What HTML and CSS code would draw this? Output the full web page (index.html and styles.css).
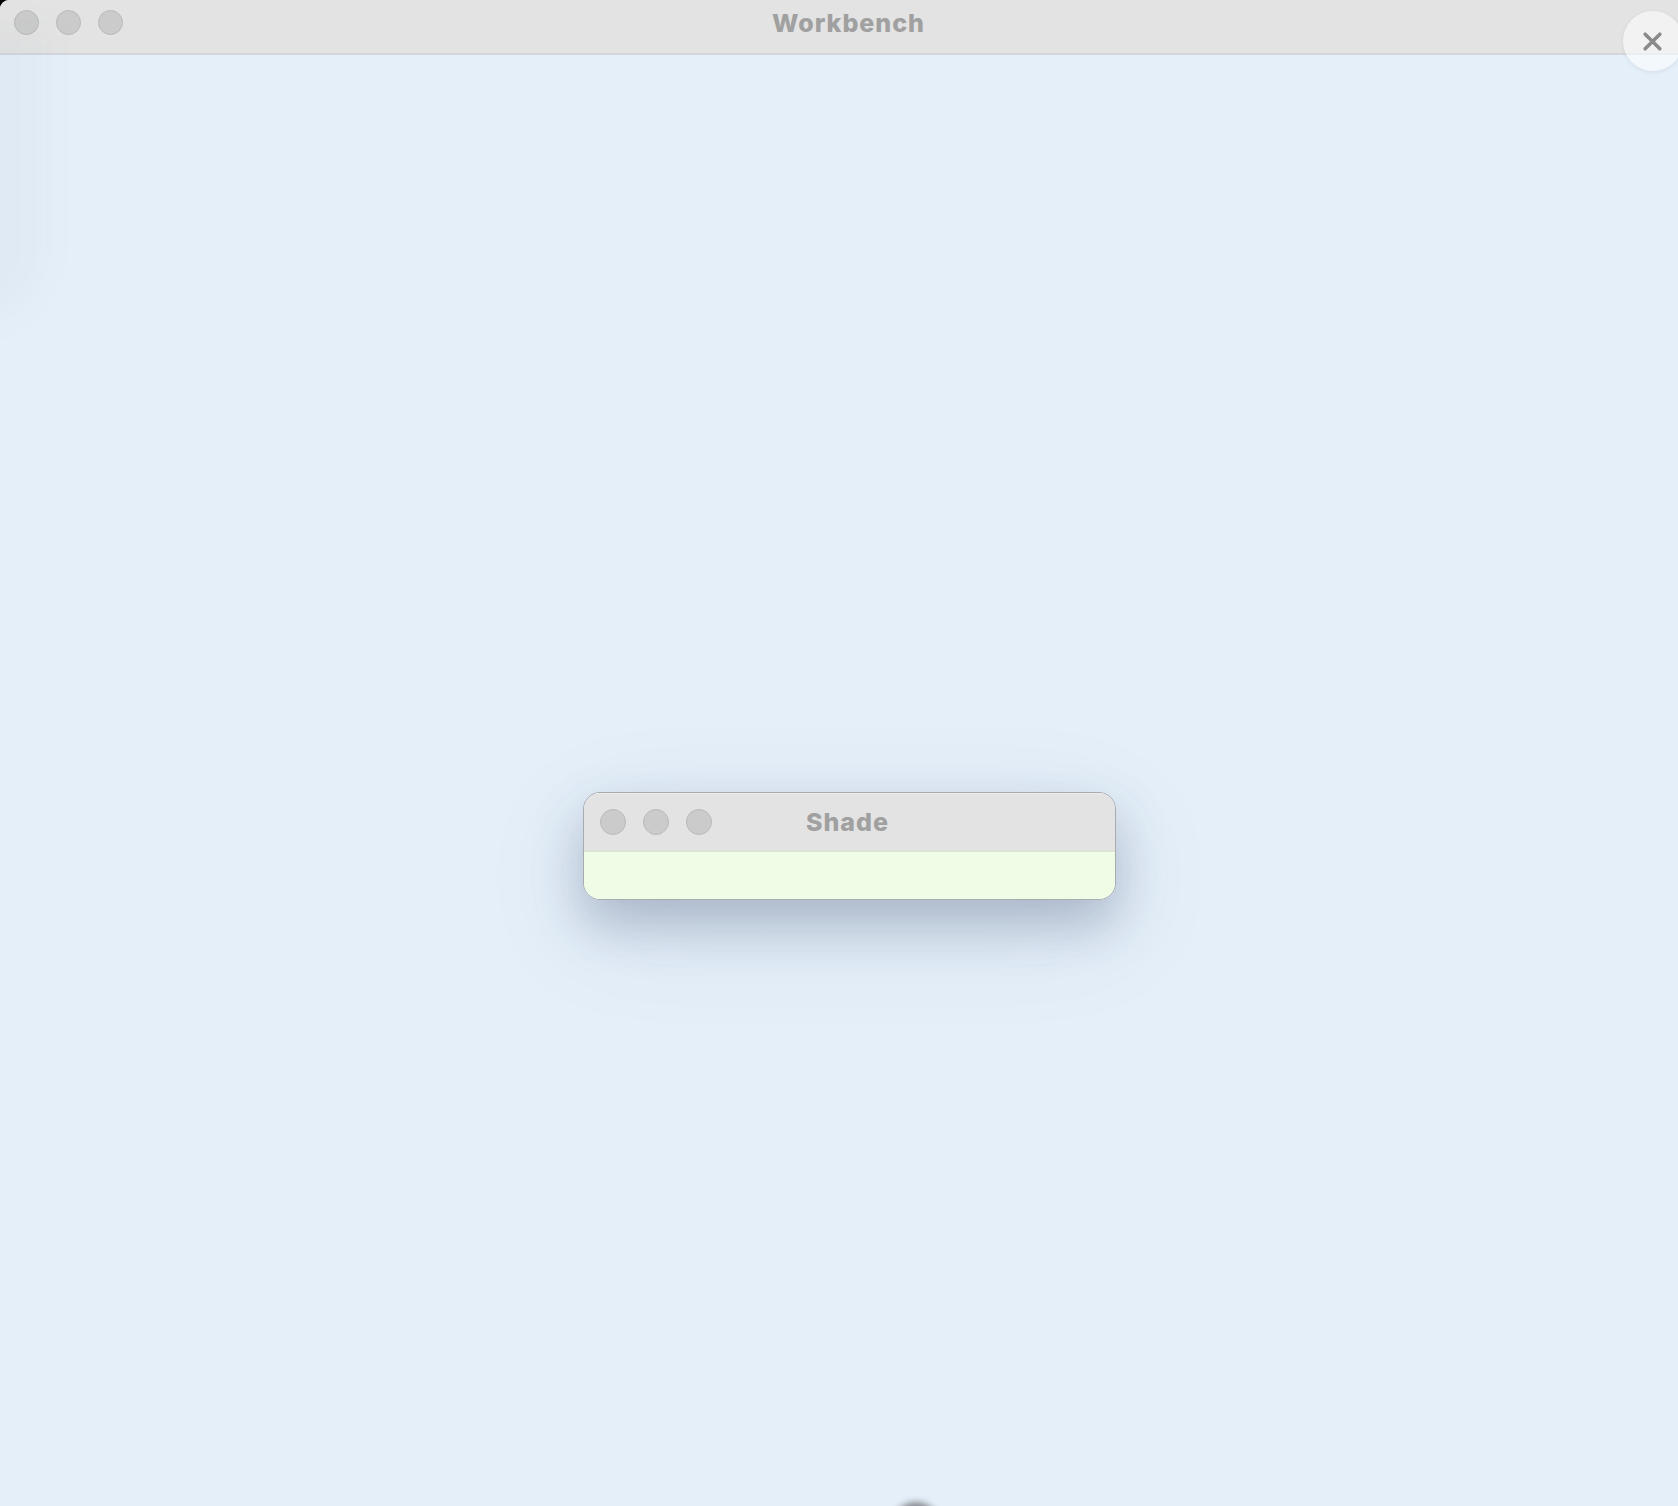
FILE: index.html
```html
<!DOCTYPE html>
<html lang="en">
<head>
<meta charset="utf-8">
<title>Workbench</title>
<link rel="stylesheet" href="styles.css">
</head>
<body>
<div class="app">
  <header class="titlebar">
    <div class="lights">
      <span class="light"></span>
      <span class="light"></span>
      <span class="light"></span>
    </div>
    <div class="title">Workbench</div>
  </header>
  <main class="desk">
    <div class="ghost-left"></div>
    <div class="ghost-bottom"></div>
    <section class="win">
      <div class="win-bar">
        <div class="lights win-lights">
          <span class="light"></span>
          <span class="light"></span>
          <span class="light"></span>
        </div>
        <div class="win-title">Shade</div>
      </div>
      <div class="win-body"></div>
    </section>
  </main>
  <button class="close" aria-label="Close">
    <svg width="21" height="21" viewBox="0 0 20 20"><path d="M3 3 L17 17 M17 3 L3 17" stroke="#8a8a8a" stroke-width="3.4" stroke-linecap="round" fill="none"/></svg>
  </button>
</div>
</body>
</html>
```

FILE: styles.css
```css
html {
  background: #000;
}
body {
  margin: 0;
  font-family: Inter, "Liberation Sans", sans-serif;
  overflow: hidden;
}
.app {
  position: relative;
  width: 1678px;
  height: 1506px;
  display: flex;
  flex-direction: column;
  background: #e5eff9;
  border-top-left-radius: 9px;
  overflow: hidden;
}
.titlebar {
  position: relative;
  height: 55px;
  flex: none;
  background: #e3e3e3;
  border-bottom: 2px solid #d3d7dc;
  display: flex;
  align-items: flex-start;
  padding-left: 14px;
  padding-top: 10px;
  box-sizing: border-box;
}
.lights {
  display: flex;
  gap: 17px;
}
.light {
  width: 23px;
  height: 23px;
  border-radius: 50%;
  background: #cbcbcb;
  border: 1px solid #b9b9b9;
}
.title {
  position: absolute;
  left: 0;
  width: 1697px;
  top: 0;
  height: 52px;
  line-height: 46px;
  text-align: center;
  font-size: 25px;
  font-weight: 800;
  color: #a0a0a0;
  letter-spacing: 1px;
}
.desk {
  position: relative;
  flex: 1;
}
.ghost-left {
  position: absolute;
  left: -90px;
  top: -30px;
  width: 135px;
  height: 300px;
  border-radius: 0 0 80px 0;
  background: rgba(60, 90, 130, 0.03);
  filter: blur(16px);
}
.ghost-bottom {
  position: absolute;
  left: 896px;
  top: 1447px;
  width: 40px;
  height: 30px;
  border-radius: 50%;
  background: rgba(60, 60, 60, 0.55);
  filter: blur(3px);
}
.win {
  position: absolute;
  left: 583px;
  top: 737px;
  width: 531px;
  height: 106px;
  border: 1px solid #a8abb0;
  border-radius: 17px;
  overflow: hidden;
  display: flex;
  flex-direction: column;
  box-shadow: 0 24px 50px rgba(50, 70, 100, 0.28), 0 30px 110px rgba(50, 80, 120, 0.1);
}
.win-bar {
  position: relative;
  height: 59px;
  flex: none;
  background: #e3e3e3;
  border-top: 1px solid #ececec;
  border-bottom: 2px solid #dbe3d5;
  display: flex;
  align-items: center;
  padding-left: 16px;
  box-sizing: border-box;
}
.win-lights .light {
  width: 24px;
  height: 24px;
}
.win-lights {
  gap: 17px;
}
.win-title {
  position: absolute;
  left: 0;
  right: 4px;
  top: 0;
  height: 58px;
  line-height: 56px;
  text-align: center;
  font-size: 25px;
  font-weight: 800;
  color: #a0a0a0;
  letter-spacing: 1px;
}
.win-body {
  flex: 1;
  background: #f0fde6;
}
.close {
  position: absolute;
  left: 1623px;
  top: 11px;
  width: 60px;
  height: 60px;
  border-radius: 50%;
  border: none;
  padding: 0;
  background: rgba(255, 255, 255, 0.55);
  box-shadow: 0 1px 4px rgba(0, 0, 0, 0.08);
  display: flex;
  align-items: center;
  justify-content: center;
  padding-right: 1px;
}
.close svg {
  display: block;
}
```
